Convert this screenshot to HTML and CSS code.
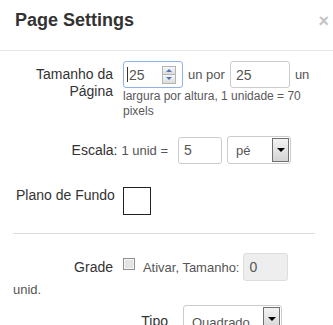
FILE: index.html
```html
<!DOCTYPE html>
<html lang="pt-br">

<head>
  <meta charset="UTF-8" />
  <meta name="viewport" content="width=device-width, initial-scale=1.0" />
  <title>Page Settings</title>
  <link rel="stylesheet" href="styles.css">
</head>

<body>

  <div class="dialog">
    <div class="dialog-header">
      <h3>Page Settings</h3>
      <span class="close">×</span>
    </div>

    <div class="dialog-body">
      <!-- Tamanho da página -->
      <div class="row row-top">
        <label class="row-label">Tamanho da Página</label>
        <div class="controls">
          <div class="line">
            <div class="spin-field">
              <span class="caret"></span>
              <input type="text" value="25">
              <span class="spinner">
                <span class="spin-btn"><i class="arrow-up"></i></span>
                <span class="spin-btn"><i class="arrow-down"></i></span>
              </span>
            </div>
            <span class="unit">un por</span>
            <input class="field w60" type="text" value="25">
            <span class="unit">un</span>
          </div>
          <p class="help">largura por altura, 1 unidade = 70 pixels</p>
        </div>
      </div>

      <!-- Escala -->
      <div class="row row-scale">
        <label class="row-label wide">Escala: <span class="unit">1 unid =</span></label>
        <input class="field w44" type="text" value="5">
        <div class="select w64">
          <span>pé</span>
          <span class="select-btn"><i class="arrow-down dark"></i></span>
        </div>
      </div>

      <!-- Plano de fundo -->
      <div class="row row-top row-bg">
        <label class="row-label left">Plano de Fundo</label>
        <span class="swatch"></span>
      </div>

      <hr>

      <!-- Grade -->
      <div class="grade">
        <label class="row-label inline">Grade</label><input type="checkbox" class="check"> <span class="unit">Ativar, Tamanho:</span> <input class="field w45" type="text" value="0" disabled> <span class="unit">unid.</span>
      </div>

      <div class="row row-type">
        <label class="row-label wide">Tipo</label>
        <div class="select w99 tall">
          <span>Quadrado</span>
          <span class="select-btn"><i class="arrow-down dark"></i></span>
        </div>
      </div>
    </div>
  </div>

</body>

</html>
```

FILE: styles.css
```css
body {
  margin: 0;
  font-family: "Liberation Sans", Arial, sans-serif;
  font-size: 14px;
  line-height: 17px;
  color: #555;
  background: #fff;
}

.dialog-header {
  display: flex;
  justify-content: space-between;
  align-items: flex-start;
  padding: 10px 4px 18px 15px;
  border-bottom: 1px solid #e5e5e5;
}

.dialog-header h3 {
  margin: 0;
  font-size: 18px;
  line-height: 20px;
  font-weight: bold;
  color: #333;
}

.close {
  font-size: 18px;
  line-height: 22px;
  font-weight: bold;
  color: #c4c4c4;
}

.dialog-body {
  padding: 10px 18px 0 13px;
}

.row {
  display: flex;
  align-items: center;
}

.row-top {
  align-items: flex-start;
}

.row-label {
  flex-shrink: 0;
  width: 100px;
  margin-right: 10px;
  text-align: right;
  color: #333;
}

.row-top .row-label {
  padding-top: 5px;
}

.row-label.wide {
  width: 155px;
}

.row-label.left {
  text-align: left;
  white-space: nowrap;
  padding-left: 3px;
  box-sizing: border-box;
}

.row-label.inline {
  display: inline-block;
}

.controls {
  flex: 1;
}

.line {
  display: flex;
  align-items: center;
  gap: 5px;
}

.unit {
  font-size: 13px;
  color: #555;
}

.help {
  margin: 1px 0 0;
  font-size: 12px;
  line-height: 15px;
  color: #595959;
}

input {
  font-family: inherit;
}

.field {
  box-sizing: border-box;
  height: 27px;
  padding: 0 5px;
  border: 1px solid #ccc;
  border-radius: 3px;
  font-size: 14px;
  color: #555;
  background: #fff;
}

.field:disabled {
  background: #eee;
  border-color: #ddd;
  height: 28px;
}

.w44 { width: 44px; }
.w45 { width: 45px; }
.w60 { width: 60px; }
.w64 { width: 64px; }
.w99 { width: 99px; }

.spin-field {
  box-sizing: border-box;
  display: flex;
  align-items: center;
  width: 60px;
  height: 27px;
  padding: 0 6px 0 3px;
  border: 1px solid #8fb3e6;
  border-radius: 3px;
}

.spin-field input {
  flex: 1;
  width: 20px;
  padding: 0 0 0 1px;
  border: none;
  outline: none;
  font-size: 14px;
  color: #555;
}

.caret {
  width: 1px;
  height: 15px;
  background: #333;
}

.spinner {
  display: flex;
  flex-direction: column;
}

.spin-btn {
  display: flex;
  align-items: center;
  justify-content: center;
  width: 12px;
  height: 7px;
  border: 1px solid #b5b5b5;
  background: linear-gradient(#f7f7f7, #dcdcdc);
}

.spin-btn + .spin-btn {
  border-top: none;
  height: 8px;
}

.arrow-up,
.arrow-down {
  width: 0;
  height: 0;
  border-left: 3px solid transparent;
  border-right: 3px solid transparent;
}

.arrow-up {
  border-bottom: 3px solid #4d76b3;
}

.arrow-down {
  border-top: 3px solid #4d76b3;
}

.arrow-down.dark {
  border-top-color: #000;
  border-left-width: 4px;
  border-right-width: 4px;
  border-top-width: 4px;
}

.select {
  box-sizing: border-box;
  display: flex;
  align-items: center;
  justify-content: space-between;
  height: 28px;
  margin-left: 5px;
  padding: 0 1px 0 8px;
  border: 1px solid #ccc;
  border-radius: 3px;
  font-size: 13px;
  color: #555;
  background: #fff;
}

.select.tall {
  height: 32px;
  align-items: flex-start;
  padding-top: 1px;
}

.select.tall span:first-child {
  padding-top: 7px;
}

.select-btn {
  box-sizing: border-box;
  display: flex;
  align-items: center;
  justify-content: center;
  width: 17px;
  height: 24px;
  border: 1px solid #707070;
  background: linear-gradient(#f2f2f2, #d4d4d4);
}

.row-scale {
  margin-top: 17px;
}

.row-bg {
  margin-top: 23px;
}

.row-bg .row-label {
  padding-top: 0;
}

.swatch {
  box-sizing: border-box;
  width: 28px;
  height: 28px;
  border: 1px solid #222;
  background: #fff;
}

hr {
  margin: 18px 0 19px;
  border: none;
  border-top: 1px solid #ddd;
}

.check {
  appearance: none;
  box-sizing: border-box;
  width: 12px;
  height: 12px;
  margin: 0 4px 0 0;
  vertical-align: 2px;
  border: 1px solid #8f8f8f;
  background: #e4e4e4;
  box-shadow: inset 0 0 0 1px #f6f6f6;
}

.row-type {
  margin-top: 7px;
}
```
